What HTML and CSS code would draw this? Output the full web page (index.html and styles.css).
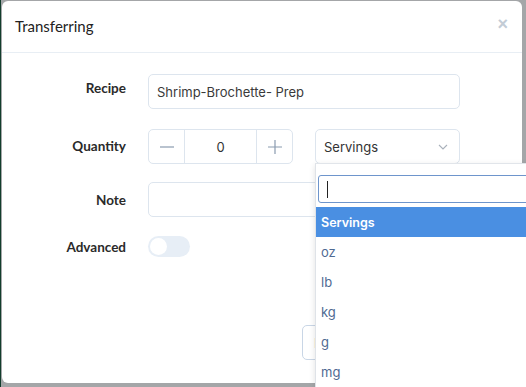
FILE: index.html
```html
<!DOCTYPE html>
<html lang="en">
<head>
  <meta charset="UTF-8" />
  <meta name="viewport" content="width=device-width, initial-scale=1.0"/>
  <title>Transferring</title>
  <link rel="stylesheet" href="styles.css">
</head>
<body>

  <div class="transfer-modal">
    <div class="transfer-header">
      <div class="transfer-title">Transferring</div>
      <button class="transfer-close">&times;</button>
    </div>

    <div class="transfer-form">
      <label class="transfer-label transfer-label-top">Recipe</label>
      <div class="transfer-input">Shrimp-Brochette- Prep</div>

      <label class="transfer-label">Quantity</label>
      <div class="transfer-qty-row">
        <div class="transfer-stepper">
          <button class="transfer-step-btn">
            <svg width="14" height="14" viewBox="0 0 14 14"><path d="M0 7h14" stroke="#8a9bb0" stroke-width="1.2"/></svg>
          </button>
          <div class="transfer-step-value">0</div>
          <button class="transfer-step-btn">
            <svg width="14" height="14" viewBox="0 0 14 14"><path d="M0 7h14M7 0v14" stroke="#8a9bb0" stroke-width="1.2"/></svg>
          </button>
        </div>
        <div class="transfer-select">
          <span>Servings</span>
          <svg width="10" height="6" viewBox="0 0 10 6"><path d="M1 1l4 4 4-4" fill="none" stroke="#a9b1bb" stroke-width="1.1"/></svg>
        </div>
      </div>

      <label class="transfer-label">Note</label>
      <div class="transfer-input"></div>

      <label class="transfer-label">Advanced</label>
      <div class="transfer-toggle"><span class="transfer-knob"></span></div>
    </div>

    <div class="transfer-footer">
      <button class="transfer-btn">Back</button>
      <button class="transfer-btn transfer-btn-main">Transfer</button>
    </div>

    <div class="unit-dropdown">
      <div class="unit-search"><span class="unit-caret"></span></div>
      <div class="unit-option unit-option-active">Servings</div>
      <div class="unit-option">oz</div>
      <div class="unit-option">lb</div>
      <div class="unit-option">kg</div>
      <div class="unit-option">g</div>
      <div class="unit-option">mg</div>
    </div>
  </div>

</body>
</html>
```

FILE: styles.css
```css
* {
  box-sizing: border-box;
}

body {
  margin: 0;
  padding: 1px 4px 4px 1px;
  height: 387px;
  overflow: hidden;
  background: #a4a6a8;
  border-left: 1px solid #123d2c;
  font-family: Lato, "Noto Sans", sans-serif;
}

.transfer-modal {
  position: relative;
  height: 382px;
  background: #fff;
  border-radius: 6px;
}

.transfer-header {
  height: 52px;
  padding: 0 14px 0 13px;
  border-bottom: 1px solid #e8eef4;
  display: flex;
  align-items: center;
  justify-content: space-between;
}

.transfer-title {
  font-size: 15px;
  color: #222;
  padding-bottom: 2px;
}

.transfer-close {
  border: none;
  background: none;
  padding: 0;
  font-size: 18px;
  line-height: 1;
  color: #c3ccd6;
  font-family: Arial, sans-serif;
  font-weight: bold;
  margin-bottom: 5px;
}

.transfer-form {
  display: grid;
  grid-template-columns: 124px 1fr;
  grid-template-rows: 35px 35px 35px 21px;
  column-gap: 22px;
  row-gap: 19px;
  padding: 21px 62px 0 0;
}

.transfer-label {
  display: flex;
  align-items: center;
  justify-content: flex-end;
  font-size: 13.5px;
  font-weight: 700;
  color: #2a2a2a;
}

.transfer-label-top {
  padding-bottom: 8px;
}

.transfer-input {
  height: 35px;
  border: 1px solid #dde5ee;
  border-radius: 5px;
  padding: 0 8px;
  display: flex;
  align-items: center;
  font-family: Inter, sans-serif;
  font-size: 13px;
  color: #3a3a3a;
}

.transfer-qty-row {
  display: flex;
  gap: 22px;
  margin-top: 1px;
}

.transfer-stepper {
  width: 145px;
  height: 35px;
  display: flex;
  border: 1px solid #dde5ee;
  border-radius: 5px;
}

.transfer-step-btn {
  width: 35px;
  border: none;
  background: none;
  padding: 0;
  display: flex;
  align-items: center;
  justify-content: center;
}

.transfer-step-value {
  flex: 1;
  border-left: 1px solid #dde5ee;
  border-right: 1px solid #dde5ee;
  display: flex;
  align-items: center;
  justify-content: center;
  font-family: Inter, sans-serif;
  font-size: 13px;
  color: #333;
}

.transfer-select {
  flex: 1;
  height: 35px;
  border: 1px solid #dde5ee;
  border-radius: 5px;
  padding: 0 11px 0 8px;
  display: flex;
  align-items: center;
  justify-content: space-between;
  font-family: Inter, sans-serif;
  font-size: 13px;
  color: #333;
}

.transfer-toggle {
  width: 42px;
  height: 21px;
  border-radius: 11px;
  background: #e7eef6;
  padding: 2px;
}

.transfer-knob {
  display: block;
  width: 17px;
  height: 17px;
  border-radius: 50%;
  background: #fff;
}

.transfer-footer {
  display: flex;
  justify-content: flex-end;
  gap: 8px;
  padding: 68px 62px 0 0;
}

.transfer-btn {
  height: 35px;
  width: 72px;
  border: 1px solid #c9d6e6;
  border-radius: 5px;
  background: #fff;
  padding: 0 11px;
  text-align: left;
  font-family: Inter, sans-serif;
  font-size: 13px;
  color: #888;
}

.transfer-btn-main {
  width: 78px;
}

.unit-dropdown {
  position: absolute;
  top: 162px;
  left: 313px;
  width: 240px;
  background: #fff;
  border-top: 1px solid #e1e5ea;
  border-left: 1px solid #dfe3e8;
  box-shadow: 0 2px 6px rgba(0, 0, 0, 0.12);
  padding: 11px 0 0 0;
  font-family: Inter, sans-serif;
  font-size: 13px;
}

.unit-search {
  height: 28px;
  margin: 0 0 4px 2px;
  border: 1px solid #6e95cc;
  border-radius: 3px;
  display: flex;
  align-items: center;
  padding-left: 8px;
}

.unit-caret {
  width: 1px;
  height: 17px;
  background: #222;
}

.unit-option {
  height: 30px;
  padding-left: 5px;
  display: flex;
  align-items: center;
  color: #4f6a92;
}

.unit-option-active {
  background: #4a8fe2;
  color: #fff;
  font-weight: 600;
  font-size: 12.5px;
}
```
